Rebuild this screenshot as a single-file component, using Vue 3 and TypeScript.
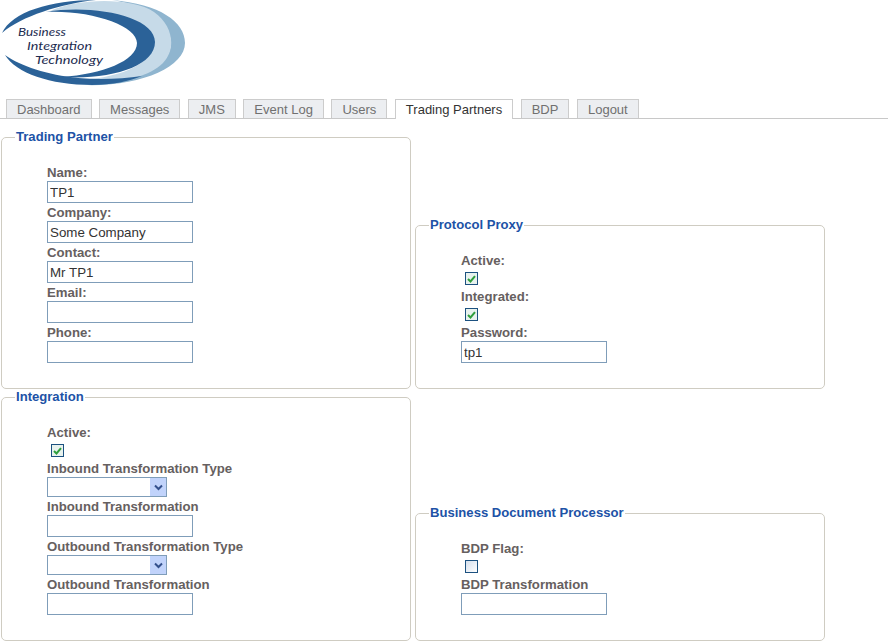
<script setup lang="ts">
interface Tab { label: string; active?: boolean }
const tabs: Tab[] = [
  { label: 'Dashboard' }, { label: 'Messages' }, { label: 'JMS' }, { label: 'Event Log' },
  { label: 'Users' }, { label: 'Trading Partners', active: true }, { label: 'BDP' }, { label: 'Logout' },
]
</script>

<template>
  <div class="page">
    <header class="logo-row">
      <svg class="logo" width="186" height="88" viewBox="0 0 186 88" role="img" aria-label="Business Integration Technology">
        <path fill="#8fb5cf" d="M112 0C160 4 185 22 185 43C185 67 140 87 84 85C134 82 171 66 171 43C171 24 148 6 112 0Z" />
        <path fill="#c6dae8" d="M50 11C78 -2 132 -3 154 12C174 26 176 50 163 63C146 80 104 87 70 80C118 80 154 64 154 42C154 24 108 6 50 11Z" />
        <path fill="#2b6298" d="M46 12C92 4 155 16 155 42C155 66 112 80 62 77C102 74 137 61 137 43C137 26 92 10 46 12Z" />
        <path fill="#2b6298" d="M2 33C12 12 50 0 96 0C60 4 22 16 2 33Z" />
        <path fill="#2b6298" d="M5 55C16 73 50 85 92 85C112 85 130 81 142 76C122 79 100 80 78 78C48 75 20 66 5 55Z" />
        <text class="lg" x="18" y="36" textLength="48" lengthAdjust="spacingAndGlyphs">Business</text>
        <text class="lg" x="27" y="50" textLength="65" lengthAdjust="spacingAndGlyphs">Integration</text>
        <text class="lg" x="35" y="64" textLength="68" lengthAdjust="spacingAndGlyphs">Technology</text>
      </svg>
    </header>

    <nav class="tabs">
      <a v-for="t in tabs" :key="t.label" class="tab" :class="{ active: t.active }">{{ t.label }}</a>
    </nav>

    <main class="grid">
      <fieldset class="box tp">
        <legend>Trading Partner</legend>
        <div class="field"><label>Name:</label><input type="text" value="TP1" /></div>
        <div class="field"><label>Company:</label><input type="text" value="Some Company" /></div>
        <div class="field"><label>Contact:</label><input type="text" value="Mr TP1" /></div>
        <div class="field"><label>Email:</label><input type="text" /></div>
        <div class="field"><label>Phone:</label><input type="text" /></div>
      </fieldset>

      <fieldset class="box pp">
        <legend>Protocol Proxy</legend>
        <div class="field check"><label>Active:</label>
          <span class="cb"><svg width="9" height="8" viewBox="0 0 9 8"><path d="M1 4L3.5 6.5L8 1.2" fill="none" stroke="#2f9e3c" stroke-width="2" /></svg></span>
        </div>
        <div class="field check"><label>Integrated:</label>
          <span class="cb"><svg width="9" height="8" viewBox="0 0 9 8"><path d="M1 4L3.5 6.5L8 1.2" fill="none" stroke="#2f9e3c" stroke-width="2" /></svg></span>
        </div>
        <div class="field"><label>Password:</label><input type="text" value="tp1" /></div>
      </fieldset>

      <fieldset class="box in">
        <legend>Integration</legend>
        <div class="field check"><label>Active:</label>
          <span class="cb"><svg width="9" height="8" viewBox="0 0 9 8"><path d="M1 4L3.5 6.5L8 1.2" fill="none" stroke="#2f9e3c" stroke-width="2" /></svg></span>
        </div>
        <div class="field sel"><label>Inbound Transformation Type</label>
          <div class="select"><select></select><span class="arrow"><svg width="9" height="7" viewBox="0 0 9 7"><path d="M1 1.5L4.5 5L8 1.5" fill="none" stroke="#33508c" stroke-width="2" /></svg></span></div>
        </div>
        <div class="field"><label>Inbound Transformation</label><input type="text" /></div>
        <div class="field sel"><label>Outbound Transformation Type</label>
          <div class="select"><select></select><span class="arrow"><svg width="9" height="7" viewBox="0 0 9 7"><path d="M1 1.5L4.5 5L8 1.5" fill="none" stroke="#33508c" stroke-width="2" /></svg></span></div>
        </div>
        <div class="field"><label>Outbound Transformation</label><input type="text" /></div>
      </fieldset>

      <fieldset class="box bd">
        <legend>Business Document Processor</legend>
        <div class="field check"><label>BDP Flag:</label><span class="cb empty"></span></div>
        <div class="field"><label>BDP Transformation</label><input type="text" /></div>
      </fieldset>
    </main>
  </div>
</template>

<style>
html, body { margin: 0; background: #fff; overflow: hidden; }
</style>

<style scoped>
.page { width: 888px; height: 641px; font-family: "Liberation Sans", Arial, sans-serif; color: #5a5555; overflow: hidden; }
.logo-row { height: 99px; box-sizing: border-box; }
.logo { display: block; }
.lg { font-family: "Lato", "Liberation Sans", sans-serif; font-style: italic; font-size: 12px; fill: #1d2c50; }
.tabs { display: flex; height: 20px; box-sizing: border-box; border-bottom: 1px solid #c8c8c8; padding-left: 6px; gap: 7.5px; }
.tab { height: 19px; box-sizing: border-box; border: 1px solid #ccc; border-bottom: none; background: #eceef1; color: #707070; font-size: 13px; line-height: 19px; padding: 0 10px; }
.tab.active { height: 20px; background: #fff; color: #333; }
.grid { display: grid; grid-template-columns: 410px 410px; grid-template-rows: 260px 252px; column-gap: 4px; padding: 10px 0 0 1px; align-items: end; }
.box { margin: 0; min-width: 0; border: 1px solid #cfccc2; border-radius: 5px; padding: 18px 0 0 45px; box-sizing: border-box; }
.tp { height: 260px; }
.pp { height: 172px; }
.in { height: 252px; }
.bd { height: 136px; }
legend { margin-inline-start: -32px; padding: 0 1px; color: #2052a6; font-weight: bold; font-size: 13.1px; line-height: 16px; }
.field { display: flex; flex-direction: column; align-items: flex-start; height: 40px; }
.field.check { height: 36px; }
.field.sel { height: 38px; }
label { font-weight: bold; font-size: 13.2px; line-height: 20px; color: #666060; height: 18px; }
input[type="text"] { width: 146px; height: 22px; box-sizing: border-box; border: 1px solid #7f9db9; padding: 1px 2px; margin: 0; font: 13.33px "Liberation Sans", Arial, sans-serif; color: #333; background: #fff; outline: none; }
.cb { display: flex; align-items: center; justify-content: center; width: 13px; height: 13px; box-sizing: border-box; margin: 3px 0 0 4px; border: 1px solid #1c5180; background: #e8f2ee; }
.cb.empty { background: linear-gradient(135deg, #d5dfec, #fff); }
.select { position: relative; width: 120px; height: 22px; }
select { display: block; width: 100%; height: 100%; box-sizing: border-box; appearance: none; border: 1px solid #7f9db9; background: #fff; margin: 0; padding: 0; }
.arrow { position: absolute; right: 1px; top: 1px; bottom: 1px; width: 16px; display: flex; align-items: center; justify-content: center; background: #c1d3fb; }
</style>
